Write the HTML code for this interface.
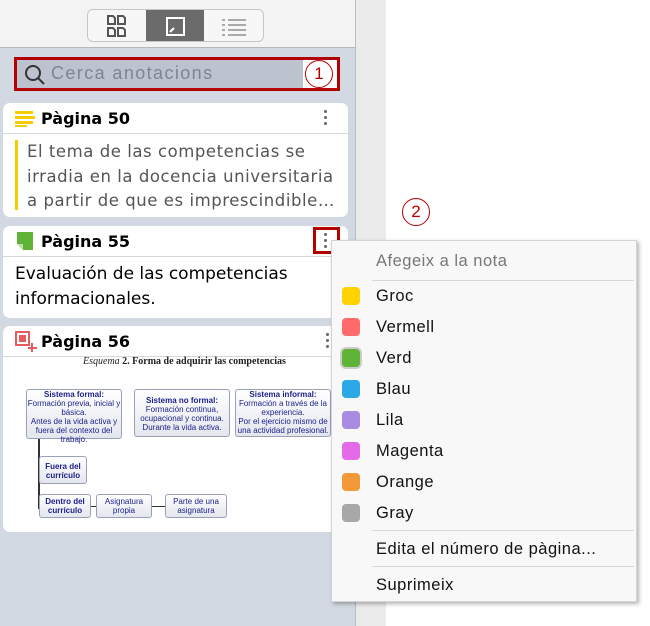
<!DOCTYPE html>
<html><head><meta charset="utf-8"><style>
*{box-sizing:border-box;margin:0;padding:0}
body{width:650px;height:626px;overflow:hidden;background:#fff;font-family:"DejaVu Sans","Liberation Sans",sans-serif;position:relative}
.left{position:absolute;left:0;top:0;width:356px;height:626px;background:#d3d9e2;border-right:1px solid #b8bcc2}
.top{position:absolute;left:0;top:0;width:355px;height:48px;background:#f3f3f3;border-bottom:1px solid #b4b8be}
.strip{position:absolute;left:356px;top:0;width:30px;height:626px;background:#ebebeb}
.seg{position:absolute;left:87px;top:9px;width:177px;height:33px;border:1px solid #c6c6c6;border-radius:6px;background:#f7f7f7;overflow:hidden}
.seg .act{position:absolute;left:58px;top:0;width:58px;height:33px;background:#6b6b6b}
.search{position:absolute;left:14px;top:57px;width:326px;height:34px;border:3px solid #b30000;background:#bcc3ce}
.search span{position:absolute;left:34px;top:3px;font-size:18px;letter-spacing:1.4px;color:#7e8590;font-family:"Liberation Sans",sans-serif}
.num{position:absolute;background:#fff;color:#b00;font-family:"Liberation Sans",sans-serif;font-size:17px;text-align:center;border:1px solid #b00;border-radius:50%;width:28px;height:28px;line-height:26px}
.card{position:absolute;left:3px;width:345px;background:#fff;border-radius:7px;overflow:hidden}
.hd{height:31px;border-bottom:1px solid #d8d8d8;position:relative}
.hd b{position:absolute;left:38px;top:6px;font-size:16px;color:#000}
.dots{position:absolute;right:20px;top:7px;width:4px}
.dots i{display:block;width:3px;height:3px;background:#666;border-radius:50%;margin-bottom:3px}
.txt{font-size:16.5px;line-height:24.5px;letter-spacing:0.3px}
.menu{position:absolute;left:331px;top:240px;width:306px;height:362px;background:#f8f8f8;border:1px solid #d4d4d4;box-shadow:2px 2px 4px rgba(0,0,0,.3);font-family:"Liberation Sans",sans-serif;font-size:16.5px;letter-spacing:0.5px}
.menu div.it{position:absolute;left:44px;color:#111}
.sw{position:absolute;left:10px;width:18px;height:18px;border-radius:4px}
.hr{position:absolute;left:40px;right:2px;height:1px;background:#d8d8d8}
.d{font-family:"Liberation Sans",sans-serif;color:#1b1d8a;font-size:8px;text-align:center;position:absolute;border:1px solid #9aa0b8;border-radius:3px;background:linear-gradient(#fff,#e4e6ee);line-height:9px;letter-spacing:0}
</style></head><body>
<div class="left"></div>
<div class="top"></div>
<div class="strip"></div>
<div class="seg">
 <svg style="position:absolute;left:19px;top:5px" width="20" height="22" viewBox="0 0 20 22" fill="none" stroke="#555" stroke-width="2"><path d="M1 1h5l2 2v6H1zM11 1h5l2 2v6h-7zM1 13h5l2 2v6H1zM11 13h5l2 2v6h-7z"/></svg>
 <div class="act"><svg style="position:absolute;left:20px;top:7px" width="19" height="19" viewBox="0 0 19 19" fill="none" stroke="#fff" stroke-width="2"><rect x="1" y="1" width="17" height="17"/><path d="M4 15l4-4"/></svg></div>
 <svg style="position:absolute;left:134px;top:8px" width="24" height="18" viewBox="0 0 24 18" stroke="#aaa" stroke-width="2"><path d="M0 2h3M6 2h18M0 7h3M6 7h18M0 12h3M6 12h18M0 17h3M6 17h18"/></svg>
</div>
<div class="search"><svg style="position:absolute;left:7px;top:4px" width="22" height="22" viewBox="0 0 22 22" fill="none" stroke="#333" stroke-width="2"><circle cx="9" cy="9" r="7"/><path d="M14 14l6 6"/></svg><span>Cerca anotacions</span></div>
<div style="position:absolute;left:303px;top:60px;width:34px;height:28px;background:#fff"></div>
<div class="num" style="left:305px;top:60px">1</div>
<div class="num" style="left:402px;top:198px;background:transparent">2</div>

<div class="card" style="top:103px;height:114px">
 <div class="hd"><svg style="position:absolute;left:12px;top:8px" width="20" height="16"><g fill="#f5cc00"><rect y="0" width="18" height="3"/><rect y="5" width="20" height="3"/><rect y="10" width="18" height="3"/><rect y="14" width="12" height="2"/></g></svg><b>Pàgina 50</b><div class="dots"><i></i><i></i><i></i></div></div>
 <div style="position:absolute;left:12px;top:37px;width:3px;height:70px;background:#f5cc00"></div>
 <div class="txt" style="position:absolute;left:24px;top:37px;color:#555;width:320px;white-space:nowrap;letter-spacing:0.55px">El tema de las competencias se<br>irradia en la docencia universitaria<br>a partir de que es imprescindible…</div>
</div>

<div class="card" style="top:226px;height:92px">
 <div class="hd"><svg style="position:absolute;left:12px;top:6px" width="20" height="18"><path d="M2 0h16v18H8L2 12z" fill="#5fb336"/><path d="M2 12h6v6z" fill="#bfe0a8"/></svg><b>Pàgina 55</b><div class="dots"><i></i><i></i><i></i></div></div>
 <div class="txt" style="position:absolute;left:12px;top:36px;color:#000;font-size:17px;letter-spacing:0">Evaluación de las competencias<br>informacionales.</div>
</div>
<div style="position:absolute;left:313px;top:227px;width:27px;height:27px;border:3px solid #b30000"></div>

<div class="card" style="top:326px;height:206px">
 <div class="hd"><svg style="position:absolute;left:12px;top:5px" width="22" height="22" fill="none"><rect x="1" y="1" width="13" height="13" stroke="#e45c5c" stroke-width="2"/><rect x="4" y="4" width="7" height="7" fill="#e45c5c"/><path d="M17 12v9M13 17h9" stroke="#e45c5c" stroke-width="2"/></svg><b>Pàgina 56</b><div class="dots" style="right:18px"><i></i><i></i><i></i></div></div>
 <div style="position:absolute;left:80px;top:30px;font-family:'Liberation Serif',serif;font-size:10px;font-weight:bold;color:#222"><i style="font-weight:normal">Esquema</i> 2. Forma de adquirir las competencias</div>
 <div class="d" style="left:23px;top:63px;width:96px;height:50px"><b>Sistema formal:</b><br>Formación previa, inicial y básica.<br>Antes de la vida activa y fuera del contexto del trabajo.</div>
 <div class="d" style="left:131px;top:63px;width:96px;height:48px;padding-top:6px"><b>Sistema no formal:</b><br>Formación continua, ocupacional y continua.<br>Durante la vida activa.</div>
 <div class="d" style="left:232px;top:63px;width:96px;height:48px"><b>Sistema informal:</b><br>Formación a través de la experiencia.<br>Por el ejercicio mismo de una actividad profesional.</div>
 <div style="position:absolute;left:35px;top:113px;width:2px;height:70px;background:#333"></div>
 <div class="d" style="left:36px;top:130px;width:48px;height:28px;padding-top:5px"><b>Fuera del currículo</b></div>
 <div class="d" style="left:36px;top:168px;width:52px;height:24px;padding-top:2px"><b>Dentro del currículo</b></div>
 <div style="position:absolute;left:88px;top:180px;width:80px;height:1px;background:#333"></div>
 <div class="d" style="left:93px;top:168px;width:56px;height:24px;padding-top:2px">Asignatura propia</div>
 <div class="d" style="left:162px;top:168px;width:62px;height:24px;padding-top:2px">Parte de una asignatura</div>
</div>

<div class="menu">
 <div class="it" style="top:11px;color:#777">Afegeix a la nota</div>
 <div class="hr" style="top:39px"></div>
 <div class="sw" style="top:46px;background:#ffd200"></div><div class="it" style="top:46px">Groc</div>
 <div class="sw" style="top:77px;background:#ff6b6b"></div><div class="it" style="top:77px">Vermell</div>
 <div class="sw" style="top:108px;background:#5fb336;box-shadow:0 0 0 2px #ccc"></div><div class="it" style="top:108px">Verd</div>
 <div class="sw" style="top:139px;background:#2da8e6"></div><div class="it" style="top:139px">Blau</div>
 <div class="sw" style="top:170px;background:#a98be2"></div><div class="it" style="top:170px">Lila</div>
 <div class="sw" style="top:201px;background:#e46be8"></div><div class="it" style="top:201px">Magenta</div>
 <div class="sw" style="top:232px;background:#f29a3a"></div><div class="it" style="top:232px">Orange</div>
 <div class="sw" style="top:263px;background:#a8a8a8"></div><div class="it" style="top:263px">Gray</div>
 <div class="hr" style="top:289px"></div>
 <div class="it" style="top:299px">Edita el número de pàgina...</div>
 <div class="hr" style="top:325px"></div>
 <div class="it" style="top:335px">Suprimeix</div>
</div>
</body></html>
